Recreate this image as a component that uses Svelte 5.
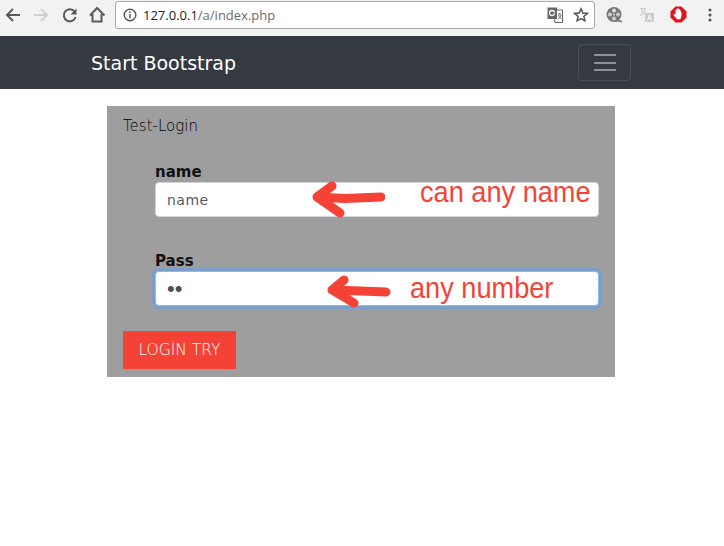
<script>
	let user = $state('');
</script>

<div class="chrome">
	<svg class="nav" width="20" height="20" viewBox="0 0 20 20"><path d="M16 10H3.500M9 4 3 10l6 6" fill="none" stroke="#5a5a5a" stroke-width="2"/></svg>
	<svg class="nav" width="20" height="20" viewBox="0 0 20 20"><path d="M2 10h12.500M9 4l6 6-6 6" fill="none" stroke="#cfcfcf" stroke-width="2"/></svg>
	<svg class="nav" width="20" height="20" viewBox="0 0 20 20"><path d="M14.500 6.500A6 6 0 1 0 15.600 12" fill="none" stroke="#5a5a5a" stroke-width="2"/><path d="M16.500 3.500v6h-6z" fill="#5a5a5a"/></svg>
	<svg class="nav" width="20" height="20" viewBox="0 0 20 20"><path d="M2 10.500 9 3l7.500 7.500M4.500 9v7.500h9V9" fill="none" stroke="#5a5a5a" stroke-width="2"/></svg>
	<div class="omnibox">
		<svg class="info" width="14" height="14" viewBox="0 0 14 14"><circle cx="7" cy="7" r="5.800" fill="none" stroke="#555" stroke-width="1.400"/><path d="M7 6v4.200M7 3.500v1.400" stroke="#555" stroke-width="1.500"/></svg>
		<span class="url"><span class="host">127.0.0.1</span>/a/index.php</span>
		<svg class="translate" width="16" height="16" viewBox="0 0 16 16"><path d="M7 3h8.500v12.500H8z" fill="#fff" stroke="#666"/><path d="M.5.500h9.500v11.500H.5z" fill="#666"/><circle cx="5" cy="6" r="2.500" fill="none" stroke="#fff" stroke-width="1.300"/><path d="M5 6h3M11 7h3M12.500 6.500v1M11.500 8c.5 2 1.500 3 3 4M14 8c-.5 2-1.500 3-3 4" fill="none" stroke="#666"/></svg>
		<svg class="star" width="16" height="16" viewBox="0 0 16 16"><path d="M8 1.800 9.800 6l4.500.4-3.400 3 1 4.400L8 11.500l-3.900 2.300 1-4.400-3.400-3L6.200 6z" fill="none" stroke="#555" stroke-width="1.500"/></svg>
	</div>
	<div class="exts">
		<svg width="17" height="17" viewBox="0 0 17 17"><path d="M11 13l5 1.500v2l-6-1z" fill="#8a8a8a"/><circle cx="8" cy="8.500" r="7.500" fill="#777"/><circle cx="8" cy="4.500" r="2" fill="#e0e0e0"/><circle cx="8" cy="12.500" r="2" fill="#d0d0d0"/><circle cx="4" cy="8.500" r="2" fill="#d0d0d0"/><circle cx="12" cy="8.500" r="2" fill="#c8c8c8"/><circle cx="8" cy="8.500" r="1" fill="#ddd"/></svg>
		<svg width="15" height="15" viewBox="0 0 15 15"><path d="M6 6h9v9H6z" fill="#ccc"/><path d="M1 1.500h6M2 1.500c.5 3 2.500 4.500 4.500 5.500M6 2c-.5 3-2.500 5-5 6.500" fill="none" stroke="#ccc" stroke-width="1.200"/><path d="M8.500 13.500l2-6 2 6M9.300 11.500h2.500" fill="none" stroke="#fff"/></svg>
		<svg width="17" height="17" viewBox="0 0 17 17"><path d="M5.500.500h6l5 5v6l-5 5h-6l-5-5v-6z" fill="#e0121a"/><path d="M5.500 9.500V4.500a1 1 0 0 1 1.200-1l.3-.8a1 1 0 0 1 1.800 0l.3.800a1 1 0 0 1 1.400.8v1.200a1 1 0 0 1 1 .8v3.500l-1 3.500h-3.500l-3-3.500-.5-1.500c.8-.6 1.500 0 2 1z" fill="#fff"/></svg>
		<svg class="dots" width="4" height="14" viewBox="0 0 4 14"><circle cx="2" cy="2" r="1.500" fill="#555"/><circle cx="2" cy="7" r="1.500" fill="#555"/><circle cx="2" cy="12" r="1.500" fill="#555"/></svg>
	</div>
</div>

<nav class="navbar">
	<a class="brand" href="#top">Start Bootstrap</a>
	<button class="toggler" aria-label="Toggle navigation">
		<span></span><span></span><span></span>
	</button>
</nav>

<main class="card">
	<h1>Test-Login</h1>
	<div class="field">
		<label for="name">name</label>
		<div class="input-wrap">
			<input id="name" placeholder="name" bind:value={user} />
			<svg class="arrow a1" width="80" height="44" viewBox="0 0 80 44"><path d="M76 20 40 21.500 12 20M27 9 12 20 35 36" fill="none" stroke="#f44336" stroke-width="9" stroke-linecap="round" stroke-linejoin="round"/></svg>
			<span class="note n1">can any name</span>
		</div>
	</div>
	<div class="field second">
		<label for="pass">Pass</label>
		<div class="input-wrap">
			<input id="pass" class="focused" type="password" value="11" />
			<svg class="arrow a2" width="80" height="44" viewBox="0 0 80 44"><path d="M66 22 40 21 12 20M24 10 12 20 34 33" fill="none" stroke="#f44336" stroke-width="9" stroke-linecap="round" stroke-linejoin="round"/></svg>
			<span class="note n2">any number</span>
		</div>
	</div>
	<button class="login">LOGİN TRY</button>
</main>

<style>
	:global(body) {
		background: #fff;
		font-family: "DejaVu Sans", sans-serif;
	}
	.chrome {
		height: 36px;
		background: #f2f2f2;
		display: flex;
		align-items: center;
		box-sizing: border-box;
		padding: 0 0 7px 4px;
	}
	.nav { margin-right: 8px; flex: none; }
	.omnibox {
		width: 480px;
		height: 28px;
		margin-left: -1px;
		box-sizing: border-box;
		background: #fff;
		border: 1px solid #a9a9a9;
		border-radius: 3px;
		display: flex;
		align-items: center;
		padding: 0 5px 0 7px;
		flex: none;
	}
	.url {
		margin-left: 6px;
		font: 13px "Open Sans", sans-serif;
		color: #6c6c6c;
		flex: 1;
	}
	.host { color: #222; }
	.translate { margin-right: 10px; }
	.exts {
		display: flex;
		align-items: center;
		margin-left: 11px;
		gap: 16px;
	}
	.dots { margin-left: 5px; }
	.navbar {
		height: 53px;
		background: #343a40;
		display: flex;
		align-items: center;
		justify-content: space-between;
		padding: 0 93px 0 91px;
	}
	.brand {
		color: #fff;
		font-size: 19px;
		text-decoration: none;
	}
	.toggler {
		width: 53px;
		height: 37px;
		background: transparent;
		border: 1px solid #484d52;
		border-radius: 4px;
		display: flex;
		flex-direction: column;
		align-items: center;
		justify-content: center;
		gap: 5.500px;
		padding: 0;
	}
	.toggler span {
		width: 22px;
		height: 2px;
		background: #8f9295;
	}
	.card {
		width: 508px;
		height: 271px;
		margin: 17px 0 0 107px;
		background: #9e9e9e;
		box-sizing: border-box;
		padding: 11px 16px 8px;
		display: flex;
		flex-direction: column;
	}
	h1 {
		margin: 0;
		font: 200 15px "DejaVu Sans", sans-serif;
		color: #000;
		line-height: 18px;
	}
	.field {
		margin: 29px 0 0 32px;
	}
	.second { margin-top: 36px; }
	label {
		display: block;
		font-size: 15px;
		font-weight: 700;
		line-height: 17px;
		margin-bottom: 1px;
		color: #111;
	}
	.input-wrap { position: relative; }
	input {
		display: block;
		width: 100%;
		height: 35px;
		box-sizing: border-box;
		background: #fff;
		border: 1px solid #ced4da;
		border-radius: 4px;
		padding: 0 11px;
		font: 14px "DejaVu Sans", sans-serif;
		letter-spacing: .5px;
		color: #495057;
		outline: none;
	}
	input::placeholder { color: #555b61; }
	.focused {
		border-color: #80bdff;
		box-shadow: 0 0 0 3px #7a9fc9;
		font: 22px "Liberation Sans", sans-serif;
		letter-spacing: 0;
	}
	.arrow { position: absolute; }
	.a1 { left: 150px; top: -5px; }
	.a2 { left: 165px; top: -1px; }
	.note {
		position: absolute;
		font: 30px "Liberation Sans", sans-serif;
		color: #f44336;
		white-space: nowrap;
		transform: scaleX(.905);
		transform-origin: left top;
	}
	.n1 { left: 265px; top: -7px; }
	.n2 { left: 255px; top: 0; }
	.login {
		align-self: flex-start;
		margin-top: 25px;
		width: 113px;
		height: 38px;
		background: #f44336;
		border: none;
		color: #fff;
		font: 200 15.500px "DejaVu Sans", sans-serif;
		padding: 0;
	}
</style>
